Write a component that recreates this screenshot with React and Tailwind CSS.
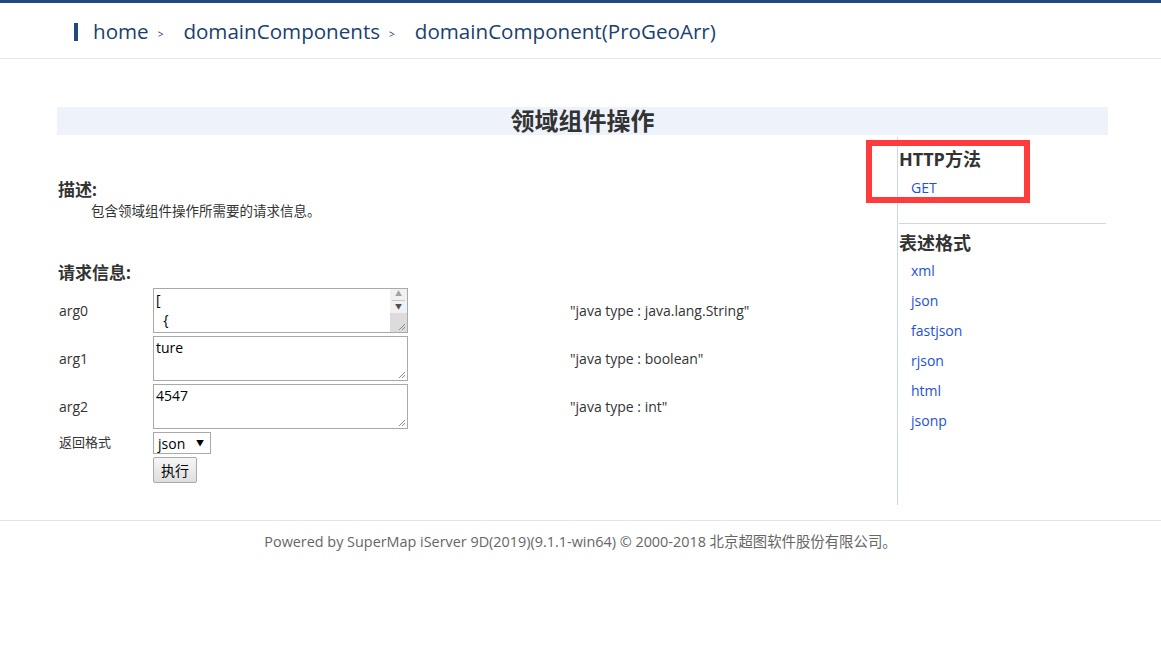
import React from "react";

const font = { fontFamily: '"Open Sans", "Noto Sans CJK SC", sans-serif' };

const args = [
  { name: "arg0", value: "[\n  {\n    \"x\": 0,\n    \"y\": 0\n  }\n]", type: '"java type : java.lang.String"', scroll: true },
  { name: "arg1", value: "ture", type: '"java type : boolean"' },
  { name: "arg2", value: "4547", type: '"java type : int"' },
];

const formats = ["xml", "json", "fastjson", "rjson", "html", "jsonp"];

function Crumb({ children, last }) {
  return (
    <>
      <span>{children}</span>
      {!last && <span className="text-[10px] ml-[9px] mr-[20px] relative top-[3px]">&gt;</span>}
    </>
  );
}

function Grip() {
  return (
    <svg width="8" height="8" viewBox="0 0 8 8" className="absolute right-[1px] bottom-[1px]">
      <path d="M7 1 L1 7 M7 4 L4 7" stroke="#888" strokeWidth="1" />
    </svg>
  );
}

function Field({ value, scroll }) {
  return (
    <div className="relative w-[255px] h-[45px] border border-[#a9a9a9] flex bg-white">
      <textarea
        defaultValue={value}
        className="flex-1 h-full px-[2px] py-[1px] text-[14px] leading-[20px] text-black resize-none overflow-hidden outline-none"
        style={font}
      />
      {scroll ? (
        <div className="w-[17px] h-full flex flex-col bg-[#f1f1f1]">
          <div className="h-[12px] flex items-center justify-center text-[7px] text-[#a3a3a3] border-b border-[#c8c8c8] mx-[2px]">▲</div>
          <div className="h-[12px] flex items-center justify-center text-[7px] text-[#505050]">▼</div>
          <div className="flex-1 bg-[#dcdcdc] relative">
            <Grip />
          </div>
        </div>
      ) : (
        <Grip />
      )}
    </div>
  );
}

export default function App() {
  return (
    <div className="relative w-[1161px] min-h-[649px] bg-white text-[#333]" style={font}>
      <div className="h-[3px] bg-[#1f4a7c]" />
      <div className="h-[56px] border-b border-[#e5e5e5] flex items-center pl-[74px] pt-[2px]">
        <div className="w-[4px] h-[18px] bg-[#1f4a7c] mr-[15px]" />
        <div className="flex items-center text-[20.6px] text-[#1b3f6e]">
          <Crumb>home</Crumb>
          <Crumb>domainComponents</Crumb>
          <Crumb last>domainComponent(ProGeoArr)</Crumb>
        </div>
      </div>

      <div className="mx-[57px] w-[1051px] mt-[48px]">
        <div className="h-[28px] bg-[#eef3fb] flex items-center justify-center">
          <h1 className="text-[24px] font-bold text-[#333] leading-none">领域组件操作</h1>
        </div>

        <div className="flex">
          <div className="w-[840px]">
            <h2 className="mt-[43px] text-[17px] font-bold leading-[24px] pl-[1px]">描述:</h2>
            <p className="pl-[34px] text-[13.5px] leading-[18px]">包含领域组件操作所需要的请求信息。</p>
            <h2 className="mt-[41px] text-[17px] font-bold leading-[24px] pl-[1px]">请求信息:</h2>
            <div className="mt-[3px] flex flex-col gap-[3px] text-[14px]">
              {args.map((a) => (
                <div key={a.name} className="flex items-center">
                  <span className="w-[96px] pl-[2px]">{a.name}</span>
                  <Field value={a.value} scroll={a.scroll} />
                  <span className="ml-[162px]">{a.type}</span>
                </div>
              ))}
              <div className="flex items-start">
                <span className="w-[96px] pl-[2px] text-[13px] pt-[1px]">返回格式</span>
                <div className="w-[58px] h-[22px] border border-[#a9a9a9] flex items-center justify-between pl-[4px] pr-[6px] text-[14px] text-black">
                  <span>json</span>
                  <span className="text-[8px]">▼</span>
                </div>
              </div>
              <div className="pl-[96px]">
                <button className="w-[44px] h-[26px] border border-[#a9a9a9] rounded-[2px] bg-gradient-to-b from-[#f6f6f6] to-[#dedede] text-[14px] text-black">
                  执行
                </button>
              </div>
            </div>
          </div>

          <div className="ml-auto w-[211px] mt-[2px] h-[368px] border-l border-[#c9d8f0] pl-[1px]">
            <h3 className="mt-[10px] text-[18px] font-bold leading-[24px]">HTTP方法</h3>
            <div className="mt-[7px] pl-[12px] text-[14px] leading-[20px] text-[#2251d8]">GET</div>
            <div className="mt-[25px] mr-[2px] border-t border-[#c9d8f0]" />
            <h3 className="mt-[7px] text-[18px] font-bold leading-[24px]">表述格式</h3>
            <div className="mt-[6px] pl-[12px] flex flex-col gap-[10px] text-[14px] leading-[20px] text-[#2251d8]">
              {formats.map((f) => (
                <a key={f} href="#">{f}</a>
              ))}
            </div>
          </div>
        </div>
      </div>

      <div className="mt-[15px] border-t border-[#e5e5e5] pt-[11px] text-center text-[14.4px] leading-[20px] text-[#666]">
        Powered by SuperMap iServer 9D(2019)(9.1.1-win64) © 2000-2018 北京超图软件股份有限公司。
      </div>

      <div className="absolute left-[866px] top-[140px] w-[164px] h-[63px] border-[6px] border-[#ff3b3b]" />
    </div>
  );
}
